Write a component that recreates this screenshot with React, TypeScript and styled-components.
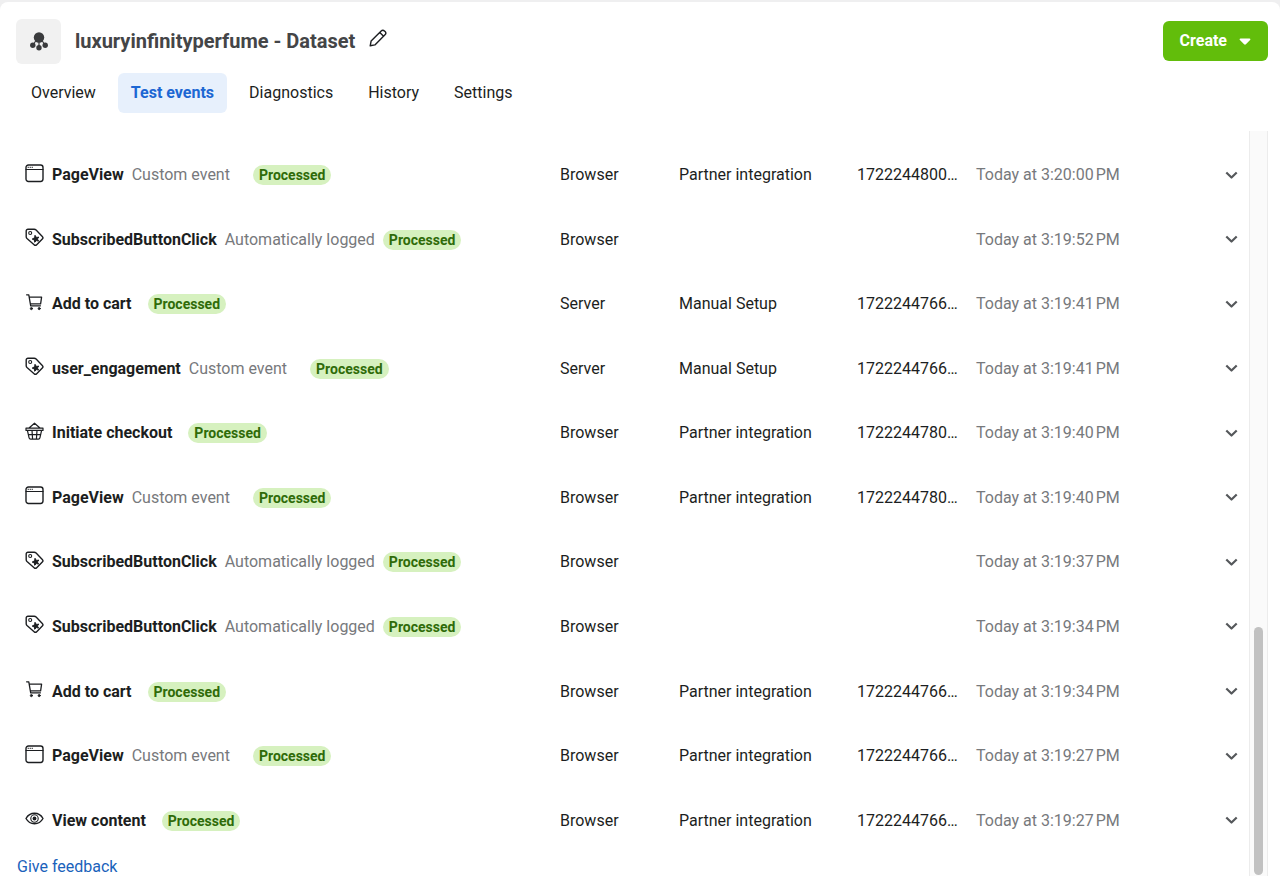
import React from 'react';
import styled, { createGlobalStyle } from 'styled-components';

const GlobalStyle = createGlobalStyle`
  * { box-sizing: border-box; }
  body {
    margin: 0;
    background: #efeff0;
    font-family: Roboto, "Liberation Sans", sans-serif;
    font-size: 16px;
    line-height: 20px;
    color: #1c1e21;
  }
  button { font: inherit; color: inherit; border: 0; cursor: pointer; }
`;

const Page = styled.div`
  min-height: 100vh;
  display: flex;
  flex-direction: column;
  border-top: 2px solid #efeff0;
  background: #efeff0;
`;

const Panel = styled.main`
  flex: 1;
  display: flex;
  flex-direction: column;
  background: #fff;
  border-radius: 8px 8px 0 0;
`;

const Header = styled.header`
  display: flex;
  align-items: flex-start;
  padding: 17px 12px 0 16px;
`;

const DatasetBadge = styled.div`
  display: grid;
  place-items: center;
  width: 45px;
  height: 45px;
  margin-right: 14px;
  border-radius: 6px;
  background: #f1f1f1;
  color: #3a3b3d;
`;

const Title = styled.h1`
  margin: 0;
  font-size: 20px;
  line-height: 44px;
  font-weight: 700;
  color: #444547;
`;

const EditButton = styled.button`
  display: flex;
  margin: 10px auto 0 14px;
  padding: 0;
  background: none;
`;

const CreateButton = styled.button`
  display: flex;
  align-items: center;
  gap: 12px;
  height: 40px;
  margin-top: 2px;
  padding: 0 17px;
  border-radius: 6px;
  background: #62bd0b;
  color: #fff;
  font-weight: 700;
`;

const Tabs = styled.nav`
  display: flex;
  gap: 9px;
  padding: 9px 18px 18px;
`;

const Tab = styled.a<{ $active?: boolean }>`
  padding: 10px 13px;
  border-radius: 6px;
  text-decoration: none;
  color: ${p => (p.$active ? '#1c67d3' : '#1c1e21')};
  background: ${p => (p.$active ? '#e7f0fc' : 'transparent')};
  font-weight: ${p => (p.$active ? 700 : 400)};
`;

const Body = styled.div`
  flex: 1;
  display: flex;
  padding-right: 12px;
`;

const Content = styled.section`
  flex: 1;
  min-width: 0;
  display: grid;
  grid-template-rows: 1fr auto;
  padding-top: 12px;
`;

const EventTable = styled.table`
  width: 100%;
  border-collapse: collapse;
  table-layout: fixed;
`;

const Col = styled.col<{ $width?: number }>`
  width: ${p => (p.$width ? `${p.$width}px` : 'auto')};
`;

const Cell = styled.td<{ $muted?: boolean }>`
  height: 64px;
  padding: 0;
  white-space: nowrap;
  color: ${p => (p.$muted ? '#77797c' : '#1c1e21')};
`;

const EventLine = styled.div`
  display: flex;
  align-items: center;
  padding-left: 25px;
`;

const EventIcon = styled.span`
  display: flex;
  margin: 0 8px 4px 0;
`;

const EventName = styled.span`
  font-weight: 700;
  margin-right: 8px;
`;

const EventKind = styled.span<{ $wide: boolean }>`
  color: #77797c;
  margin-right: ${p => (p.$wide ? 23 : 8)}px;
`;

const Status = styled.span`
  padding: 0 6px;
  border-radius: 10px;
  background: #d6f1bf;
  color: #2f6b09;
  font-size: 14px;
  font-weight: 700;
`;

const ExpandButton = styled.button`
  display: flex;
  margin-left: auto;
  margin-right: 11px;
  padding: 0;
  background: none;
  color: #55585b;
`;

const Feedback = styled.a`
  justify-self: start;
  margin: 5px 0 0 17px;
  line-height: 18px;
  color: #1a62bb;
  text-decoration: none;
`;

const ScrollTrack = styled.div`
  display: flex;
  flex-direction: column;
  justify-content: flex-end;
  width: 19px;
  padding: 0 4px 1px;
  border: solid #ececec;
  border-width: 0 1px;
  background: #fafafa;
`;

const ScrollThumb = styled.div`
  height: 33.3%;
  border-radius: 5px;
  background: #c1c1c1;
`;

type IconName = 'page' | 'tag' | 'cart' | 'basket' | 'eye';

const shapes: Record<IconName, React.ReactNode> = {
  page: (
    <>
      <rect x="1" y="1" width="17" height="16.5" rx="2.4" />
      <path d="M1 5.500h17" strokeWidth="1.200" />
      <path d="M3 3.300h.6M5 3.300h.6M7 3.300h.6" strokeWidth=".9" />
    </>
  ),
  tag: (
    <>
      <path d="M3 1.2h6.2c.8 0 1.4.3 1.9.8l6.2 6.4c.8.8.8 1.8 0 2.6l-5.6 5.7c-.8.8-1.8.8-2.6 0L2 10.5c-.5-.5-.8-1.1-.8-1.8V3c0-1.100.7-1.800 1.800-1.800z" />
      <circle cx="5.200" cy="5" r="1.500" strokeWidth="1.100" />
      <path d="M10.200 7.600l1.300 1.900 2.300-.4-1.400 1.900 1.200 2.100-2.300-.5-1.600 1.700-.3-2.300-2.200-.9 2.100-1.200z" fill="currentColor" strokeWidth="1" />
    </>
  ),
  cart: (
    <>
      <path d="M1.600 1.800h2.200l1.900 11h9.700M4.200 4.200h12.400l-1 6.700H5.400" strokeWidth="1.300" />
      <circle cx="6.400" cy="15.600" r="1.100" fill="currentColor" strokeWidth=".8" />
      <circle cx="14.200" cy="15.600" r="1.100" fill="currentColor" strokeWidth=".8" />
    </>
  ),
  basket: (
    <>
      <path d="M1 6.200h17v2.200H1zM2.400 8.400l1.700 7.500c.2 1 .7 1.300 1.500 1.300h7.800c.8 0 1.300-.3 1.500-1.300l1.700-7.500M4 6l5.500-4.800L15 6M3.300 12.700h12.400M7 8.400l.6 8.800M12 8.400l-.6 8.800" strokeWidth="1.200" />
    </>
  ),
  eye: (
    <>
      <path d="M1 9.500C3 6 6 4.300 9.500 4.300S16 6 18 9.500c-2 3.500-5 5.200-8.500 5.200S3 13 1 9.500z" />
      <circle cx="9.500" cy="9.500" r="3.700" strokeWidth="1.100" />
      <circle cx="9.500" cy="9.500" r="1.900" fill="currentColor" stroke="none" />
    </>
  ),
};

const Icon = ({ name }: { name: IconName }) => (
  <svg width="19" height="19" viewBox="0 0 19 19" fill="none" stroke="currentColor" strokeWidth="1.4" strokeLinejoin="round" strokeLinecap="round" aria-hidden="true">
    {shapes[name]}
  </svg>
);

interface EventRow {
  icon: IconName;
  name: string;
  kind?: string;
  source: string;
  setup?: string;
  id?: string;
  time: string;
}

const pageView = { icon: 'page' as const, name: 'PageView', kind: 'Custom event', source: 'Browser', setup: 'Partner integration' };
const subscribed = { icon: 'tag' as const, name: 'SubscribedButtonClick', kind: 'Automatically logged', source: 'Browser' };

const events: EventRow[] = [
  { ...pageView, id: '1722244800…', time: '3:20:00' },
  { ...subscribed, time: '3:19:52' },
  { icon: 'cart', name: 'Add to cart', source: 'Server', setup: 'Manual Setup', id: '1722244766…', time: '3:19:41' },
  { icon: 'tag', name: 'user_engagement', kind: 'Custom event', source: 'Server', setup: 'Manual Setup', id: '1722244766…', time: '3:19:41' },
  { icon: 'basket', name: 'Initiate checkout', source: 'Browser', setup: 'Partner integration', id: '1722244780…', time: '3:19:40' },
  { ...pageView, id: '1722244780…', time: '3:19:40' },
  { ...subscribed, time: '3:19:37' },
  { ...subscribed, time: '3:19:34' },
  { icon: 'cart', name: 'Add to cart', source: 'Browser', setup: 'Partner integration', id: '1722244766…', time: '3:19:34' },
  { ...pageView, id: '1722244766…', time: '3:19:27' },
  { icon: 'eye', name: 'View content', source: 'Browser', setup: 'Partner integration', id: '1722244766…', time: '3:19:27' },
];

const tabs = ['Overview', 'Test events', 'Diagnostics', 'History', 'Settings'];

export default function App() {
  return (
    <Page>
      <GlobalStyle />
      <Panel>
        <Header>
          <DatasetBadge>
            <svg width="18" height="19" viewBox="0 0 18 19" fill="currentColor" aria-hidden="true">
              <circle cx="9" cy="5.500" r="5.200" />
              <circle cx="2.800" cy="13.300" r="2.700" />
              <circle cx="15.200" cy="13.300" r="2.700" />
              <circle cx="9" cy="15.700" r="2.700" />
              <path d="M9 8v7M6 8.500l-3 4.500M12 8.500l3 4.500" stroke="currentColor" strokeWidth="1.200" />
            </svg>
          </DatasetBadge>
          <Title>luxuryinfinityperfume - Dataset</Title>
          <EditButton aria-label="Edit name">
            <svg width="18" height="18" viewBox="0 0 18 18" fill="none" stroke="currentColor" strokeWidth="1.400" strokeLinejoin="round" aria-hidden="true">
              <path d="M1.200 16.800l.9-4.700L12.200 2c1-1 2.300-1 3.200-.1l.7.7c.9.9.9 2.200-.1 3.200L5.900 15.900zM10.800 3.400l3.800 3.800" />
            </svg>
          </EditButton>
          <CreateButton>
            Create
            <svg width="12" height="7" viewBox="0 0 12 7" fill="currentColor" aria-hidden="true">
              <path d="M1.500.5h9c.9 0 1.200.8.6 1.400L6.900 6.200c-.6.600-1.200.600-1.800 0L.9 1.900C.3 1.300.6.500 1.500.500z" />
            </svg>
          </CreateButton>
        </Header>
        <Tabs>
          {tabs.map(t => (
            <Tab key={t} href="#" $active={t === 'Test events'}>{t}</Tab>
          ))}
        </Tabs>
        <Body>
          <Content>
            <EventTable>
              <colgroup>
                <Col />
                <Col $width={119} />
                <Col $width={178} />
                <Col $width={119} />
                <Col $width={180} />
                <Col $width={93} />
              </colgroup>
              <tbody>
                {events.map((e, i) => (
                  <tr key={i}>
                    <Cell>
                      <EventLine>
                        <EventIcon><Icon name={e.icon} /></EventIcon>
                        <EventName>{e.name}</EventName>
                        <EventKind $wide={e.kind === 'Custom event'}>{e.kind}</EventKind>
                        <Status>Processed</Status>
                      </EventLine>
                    </Cell>
                    <Cell>{e.source}</Cell>
                    <Cell>{e.setup}</Cell>
                    <Cell>{e.id}</Cell>
                    <Cell $muted>{`Today at ${e.time}\u202fPM`}</Cell>
                    <Cell>
                      <ExpandButton aria-label={`Expand ${e.name}`}>
                        <svg width="13" height="9" viewBox="0 0 13 9" fill="none" stroke="currentColor" strokeWidth="2.2" strokeLinejoin="round" aria-hidden="true">
                          <path d="M1.300 1.500l5.200 5 5.200-5" />
                        </svg>
                      </ExpandButton>
                    </Cell>
                  </tr>
                ))}
              </tbody>
            </EventTable>
            <Feedback href="#">Give feedback</Feedback>
          </Content>
          <ScrollTrack aria-hidden="true">
            <ScrollThumb />
          </ScrollTrack>
        </Body>
      </Panel>
    </Page>
  );
}
